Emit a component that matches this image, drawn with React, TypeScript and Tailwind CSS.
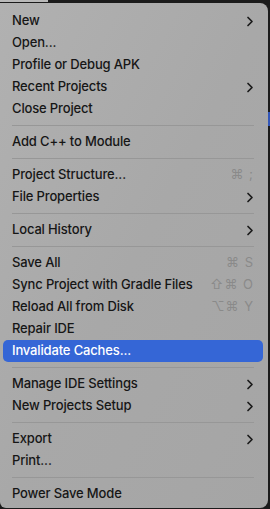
import React from "react";

type Item =
  | { kind: "sep" }
  | { kind: "item"; label: string; sub?: boolean; keys?: string; active?: boolean };

const ITEMS: Item[] = [
  { kind: "item", label: "New", sub: true },
  { kind: "item", label: "Open..." },
  { kind: "item", label: "Profile or Debug APK" },
  { kind: "item", label: "Recent Projects", sub: true },
  { kind: "item", label: "Close Project" },
  { kind: "sep" },
  { kind: "item", label: "Add C++ to Module" },
  { kind: "sep" },
  { kind: "item", label: "Project Structure...", keys: "⌘ ;" },
  { kind: "item", label: "File Properties", sub: true },
  { kind: "sep" },
  { kind: "item", label: "Local History", sub: true },
  { kind: "sep" },
  { kind: "item", label: "Save All", keys: "⌘ S" },
  { kind: "item", label: "Sync Project with Gradle Files", keys: "⇧⌘ O" },
  { kind: "item", label: "Reload All from Disk", keys: "⌥⌘ Y" },
  { kind: "item", label: "Repair IDE" },
  { kind: "item", label: "Invalidate Caches...", active: true },
  { kind: "sep" },
  { kind: "item", label: "Manage IDE Settings", sub: true },
  { kind: "item", label: "New Projects Setup", sub: true },
  { kind: "sep" },
  { kind: "item", label: "Export", sub: true },
  { kind: "item", label: "Print..." },
  { kind: "sep" },
  { kind: "item", label: "Power Save Mode" },
];

function Chevron() {
  return (
    <svg width="8" height="11" viewBox="0 0 8 11" className="shrink-0">
      <path d="M2 1.5 L6 5.5 L2 9.5" fill="none" stroke="#1a1a1a" strokeWidth="1.7" strokeLinecap="round" strokeLinejoin="round" />
    </svg>
  );
}

export default function App() {
  return (
    <div className="relative w-[270px] h-[509px] overflow-hidden bg-[#1b1b1b] font-['Inter','Liberation_Sans',sans-serif] text-[13px] tracking-[-0.15px]">
      {/* menu bar remnant */}
      <div className="h-[2px] w-[48px] bg-[#b9b9b9]" />
      <div className="absolute right-0 top-[112px] h-[14px] w-[2px] bg-[#3357b8]" />
      <div className="mt-[1px] w-[268px] h-[505px] rounded-r-lg rounded-bl-md bg-gradient-to-br from-[#b1b1b1] via-[#a8a8a8] to-[#a5a5a5] pt-[7px] pb-[3px] pl-[3px] pr-[5px] flex flex-col">
        {ITEMS.map((it, i) =>
          it.kind === "sep" ? (
            <div key={i} className="h-[11px] flex items-center px-[9px]">
              <div className="h-px w-full bg-[#979797]" />
            </div>
          ) : (
            <div
              key={i}
              className={
                it.active
                  ? "h-[22px] flex items-center justify-between rounded-[5px] bg-[#3566d6] px-[9px] text-white font-[450]"
                  : "h-[22px] flex items-center justify-between px-[9px] text-[#161616] font-[450]"
              }
            >
              <span className="whitespace-nowrap">{it.label}</span>
              {it.sub && <Chevron />}
              {it.keys && <span className="text-[#8a8a8a] tracking-[1px] font-normal">{it.keys}</span>}
            </div>
          )
        )}
      </div>
    </div>
  );
}
